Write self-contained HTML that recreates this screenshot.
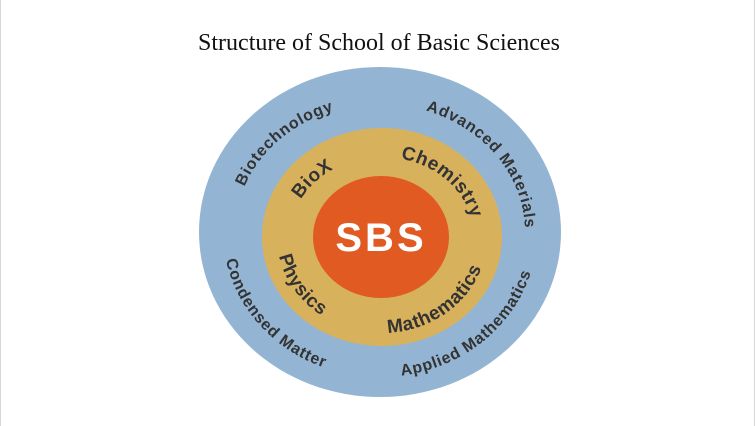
<!DOCTYPE html>
<html><head><meta charset="utf-8"><style>
html,body{margin:0;padding:0;background:#fff;}
body{width:755px;height:426px;overflow:hidden;position:relative;box-sizing:border-box;border-left:1px solid #d8d8d8;border-right:1px solid #d8d8d8;}
svg{position:absolute;left:0;top:0;}
</style></head><body>
<svg width="755" height="426" viewBox="0 0 755 426" xmlns="http://www.w3.org/2000/svg">
<defs>
<path id="ot" d="M234,232 A145,128 0 0 1 524,232"/>
<path id="ob" d="M222,232 A157,145 0 0 0 536,232"/>
<path id="mt" d="M289,237 A92,80 0 0 1 473,237"/>
<path id="mb" d="M276,237 A105,96 0 0 0 486,237"/>
</defs>
<text x="378" y="50" text-anchor="middle" font-family="Liberation Serif, serif" font-size="24" fill="#111">Structure of School of Basic Sciences</text>
<ellipse cx="379" cy="232" rx="181" ry="165" fill="#93b5d3"/>
<ellipse cx="381" cy="237" rx="120" ry="109" fill="#d8b15d"/>
<ellipse cx="380" cy="237" rx="68" ry="61" fill="#e05a22"/>
<text x="380" y="251" text-anchor="middle" font-family="Liberation Sans, sans-serif" font-weight="bold" font-size="40" letter-spacing="3" fill="#fff">SBS</text>
<g font-family="Liberation Sans, sans-serif" font-weight="bold" fill="#333">
<text font-size="16" letter-spacing="0.8"><textPath href="#ot" startOffset="25%" text-anchor="middle">Biotechnology</textPath></text>
<text font-size="16" letter-spacing="0.8"><textPath href="#ot" startOffset="80%" text-anchor="middle">Advanced Materials</textPath></text>
<text font-size="16" letter-spacing="0.8"><textPath href="#ob" startOffset="22%" text-anchor="middle">Condensed Matter</textPath></text>
<text font-size="16" letter-spacing="0.8"><textPath href="#ob" startOffset="73%" text-anchor="middle">Applied Mathematics</textPath></text>
<text font-size="19" letter-spacing="0.5"><textPath href="#mt" startOffset="23%" text-anchor="middle">BioX</textPath></text>
<text font-size="19" letter-spacing="0.5"><textPath href="#mt" startOffset="75%" text-anchor="middle">Chemistry</textPath></text>
<text font-size="19" letter-spacing="0.5"><textPath href="#mb" startOffset="18%" text-anchor="middle">Physics</textPath></text>
<text font-size="19" letter-spacing="0.5"><textPath href="#mb" startOffset="71%" text-anchor="middle">Mathematics</textPath></text>
</g>
</svg>
</body></html>
